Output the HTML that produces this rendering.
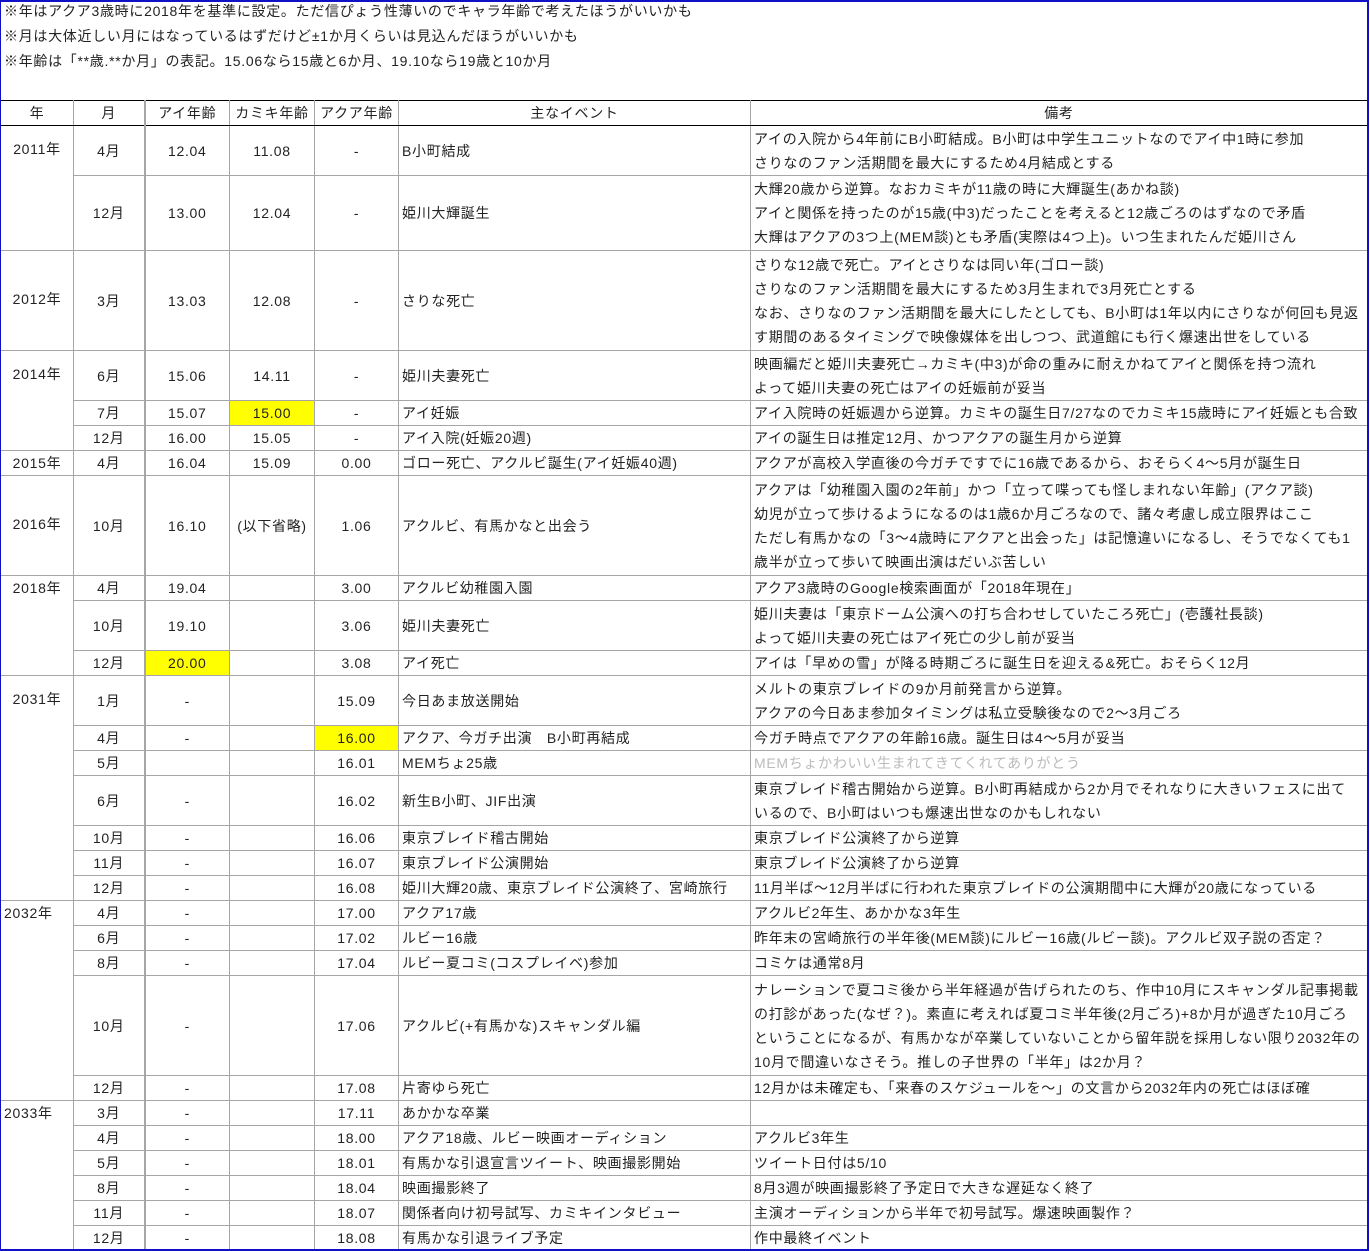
<!DOCTYPE html>
<html><head><meta charset="utf-8">
<style>
*{margin:0;padding:0;box-sizing:border-box}
body{width:1370px;height:1251px;background:#fff;font-family:"Liberation Sans","Noto Sans CJK JP",sans-serif;font-size:14px;color:#222;position:relative;overflow:hidden;letter-spacing:0.7px}
.frame{position:absolute;left:0;top:0;width:1369px;height:1251px;border:2px solid #1010c8;border-left:1px solid #1010c8;pointer-events:none}
.notes{position:absolute;left:4px;top:-1px;line-height:25px}
table{position:absolute;left:0;top:100px;border-collapse:collapse;table-layout:fixed;width:1367px}
td{border:1px solid #a6a6a6;height:25px;line-height:24px;white-space:nowrap;overflow:hidden;padding:0}
td.c{text-align:center}
td.l{padding-left:3px}
td.yr{vertical-align:top;text-align:center;border-left:1px solid #000}
td.yr.left{text-align:left;padding-left:3px}
td.m{border-right:2px solid #a6a6a6}
td.ev{border-left:1px solid #000}
tr.g td{border-top:1px solid #000}
tr.h td{border-top:1px solid #000;border-bottom:1px solid #000;text-align:center}
.y{background:#ffff00}
.gray{color:#bbb}
</style></head><body>
<div class="notes">※年はアクア3歳時に2018年を基準に設定。ただ信ぴょう性薄いのでキャラ年齢で考えたほうがいいかも<br>※月は大体近しい月にはなっているはずだけど±1か月くらいは見込んだほうがいいかも<br>※年齢は「**歳.**か月」の表記。15.06なら15歳と6か月、19.10なら19歳と10か月</div>
<table>
<colgroup><col style="width:73px"><col style="width:71px"><col style="width:85px"><col style="width:85px"><col style="width:84px"><col style="width:352px"><col style="width:617px"></colgroup>
<tr class="h"><td style="border-left:1px solid #000">年</td><td class="m">月</td><td>アイ年齢</td><td>カミキ年齢</td><td>アクア年齢</td><td class="ev">主なイベント</td><td>備考</td></tr>

<tr class="g" style="height:50px"><td class="yr" rowspan="2"><div style="line-height:46px">2011年</div></td><td class="c m">4月</td><td class="c">12.04</td><td class="c">11.08</td><td class="c">-</td><td class="l ev">B小町結成</td><td class="l">アイの入院から4年前にB小町結成。B小町は中学生ユニットなのでアイ中1時に参加<br>さりなのファン活期間を最大にするため4月結成とする</td></tr>
<tr style="height:75px"><td class="c m">12月</td><td class="c">13.00</td><td class="c">12.04</td><td class="c">-</td><td class="l ev">姫川大輝誕生</td><td class="l">大輝20歳から逆算。なおカミキが11歳の時に大輝誕生(あかね談)<br>アイと関係を持ったのが15歳(中3)だったことを考えると12歳ごろのはずなので矛盾<br>大輝はアクアの3つ上(MEM談)とも矛盾(実際は4つ上)。いつ生まれたんだ姫川さん</td></tr>

<tr class="g" style="height:100px"><td class="yr"><div style="line-height:96px">2012年</div></td><td class="c m">3月</td><td class="c">13.03</td><td class="c">12.08</td><td class="c">-</td><td class="l ev">さりな死亡</td><td class="l">さりな12歳で死亡。アイとさりなは同い年(ゴロー談)<br>さりなのファン活期間を最大にするため3月生まれで3月死亡とする<br>なお、さりなのファン活期間を最大にしたとしても、B小町は1年以内にさりなが何回も見返<br>す期間のあるタイミングで映像媒体を出しつつ、武道館にも行く爆速出世をしている</td></tr>

<tr class="g" style="height:50px"><td class="yr" rowspan="3"><div style="line-height:46px">2014年</div></td><td class="c m">6月</td><td class="c">15.06</td><td class="c">14.11</td><td class="c">-</td><td class="l ev">姫川夫妻死亡</td><td class="l">映画編だと姫川夫妻死亡→カミキ(中3)が命の重みに耐えかねてアイと関係を持つ流れ<br>よって姫川夫妻の死亡はアイの妊娠前が妥当</td></tr>
<tr><td class="c m">7月</td><td class="c">15.07</td><td class="c y">15.00</td><td class="c">-</td><td class="l ev">アイ妊娠</td><td class="l">アイ入院時の妊娠週から逆算。カミキの誕生日7/27なのでカミキ15歳時にアイ妊娠とも合致</td></tr>
<tr><td class="c m">12月</td><td class="c">16.00</td><td class="c">15.05</td><td class="c">-</td><td class="l ev">アイ入院(妊娠20週)</td><td class="l">アイの誕生日は推定12月、かつアクアの誕生月から逆算</td></tr>

<tr class="g"><td class="yr">2015年</td><td class="c m">4月</td><td class="c">16.04</td><td class="c">15.09</td><td class="c">0.00</td><td class="l ev">ゴロー死亡、アクルビ誕生(アイ妊娠40週)</td><td class="l">アクアが高校入学直後の今ガチですでに16歳であるから、おそらく4～5月が誕生日</td></tr>

<tr class="g" style="height:100px"><td class="yr"><div style="line-height:96px">2016年</div></td><td class="c m">10月</td><td class="c">16.10</td><td class="c">(以下省略)</td><td class="c">1.06</td><td class="l ev">アクルビ、有馬かなと出会う</td><td class="l">アクアは「幼稚園入園の2年前」かつ「立って喋っても怪しまれない年齢」(アクア談)<br>幼児が立って歩けるようになるのは1歳6か月ごろなので、諸々考慮し成立限界はここ<br>ただし有馬かなの「3～4歳時にアクアと出会った」は記憶違いになるし、そうでなくても1<br>歳半が立って歩いて映画出演はだいぶ苦しい</td></tr>

<tr class="g"><td class="yr" rowspan="3">2018年</td><td class="c m">4月</td><td class="c">19.04</td><td></td><td class="c">3.00</td><td class="l ev">アクルビ幼稚園入園</td><td class="l">アクア3歳時のGoogle検索画面が「2018年現在」</td></tr>
<tr style="height:50px"><td class="c m">10月</td><td class="c">19.10</td><td></td><td class="c">3.06</td><td class="l ev">姫川夫妻死亡</td><td class="l">姫川夫妻は「東京ドーム公演への打ち合わせしていたころ死亡」(壱護社長談)<br>よって姫川夫妻の死亡はアイ死亡の少し前が妥当</td></tr>
<tr><td class="c m">12月</td><td class="c y">20.00</td><td></td><td class="c">3.08</td><td class="l ev">アイ死亡</td><td class="l">アイは「早めの雪」が降る時期ごろに誕生日を迎える&amp;死亡。おそらく12月</td></tr>

<tr class="g" style="height:50px"><td class="yr" rowspan="7"><div style="line-height:46px">2031年</div></td><td class="c m">1月</td><td class="c">-</td><td></td><td class="c">15.09</td><td class="l ev">今日あま放送開始</td><td class="l">メルトの東京ブレイドの9か月前発言から逆算。<br>アクアの今日あま参加タイミングは私立受験後なので2～3月ごろ</td></tr>
<tr><td class="c m">4月</td><td class="c">-</td><td></td><td class="c y">16.00</td><td class="l ev">アクア、今ガチ出演　B小町再結成</td><td class="l">今ガチ時点でアクアの年齢16歳。誕生日は4～5月が妥当</td></tr>
<tr><td class="c m">5月</td><td></td><td></td><td class="c">16.01</td><td class="l ev">MEMちょ25歳</td><td class="l gray">MEMちょかわいい生まれてきてくれてありがとう</td></tr>
<tr style="height:50px"><td class="c m">6月</td><td class="c">-</td><td></td><td class="c">16.02</td><td class="l ev">新生B小町、JIF出演</td><td class="l">東京ブレイド稽古開始から逆算。B小町再結成から2か月でそれなりに大きいフェスに出て<br>いるので、B小町はいつも爆速出世なのかもしれない</td></tr>
<tr><td class="c m">10月</td><td class="c">-</td><td></td><td class="c">16.06</td><td class="l ev">東京ブレイド稽古開始</td><td class="l">東京ブレイド公演終了から逆算</td></tr>
<tr><td class="c m">11月</td><td class="c">-</td><td></td><td class="c">16.07</td><td class="l ev">東京ブレイド公演開始</td><td class="l">東京ブレイド公演終了から逆算</td></tr>
<tr><td class="c m">12月</td><td class="c">-</td><td></td><td class="c">16.08</td><td class="l ev">姫川大輝20歳、東京ブレイド公演終了、宮崎旅行</td><td class="l">11月半ば～12月半ばに行われた東京ブレイドの公演期間中に大輝が20歳になっている</td></tr>

<tr class="g"><td class="yr left" rowspan="5">2032年</td><td class="c m">4月</td><td class="c">-</td><td></td><td class="c">17.00</td><td class="l ev">アクア17歳</td><td class="l">アクルビ2年生、あかかな3年生</td></tr>
<tr><td class="c m">6月</td><td class="c">-</td><td></td><td class="c">17.02</td><td class="l ev">ルビー16歳</td><td class="l">昨年末の宮崎旅行の半年後(MEM談)にルビー16歳(ルビー談)。アクルビ双子説の否定？</td></tr>
<tr><td class="c m">8月</td><td class="c">-</td><td></td><td class="c">17.04</td><td class="l ev">ルビー夏コミ(コスプレイベ)参加</td><td class="l">コミケは通常8月</td></tr>
<tr style="height:100px"><td class="c m">10月</td><td class="c">-</td><td></td><td class="c">17.06</td><td class="l ev">アクルビ(+有馬かな)スキャンダル編</td><td class="l">ナレーションで夏コミ後から半年経過が告げられたのち、作中10月にスキャンダル記事掲載<br>の打診があった(なぜ？)。素直に考えれば夏コミ半年後(2月ごろ)+8か月が過ぎた10月ごろ<br>ということになるが、有馬かなが卒業していないことから留年説を採用しない限り2032年の<br>10月で間違いなさそう。推しの子世界の「半年」は2か月？</td></tr>
<tr><td class="c m">12月</td><td class="c">-</td><td></td><td class="c">17.08</td><td class="l ev">片寄ゆら死亡</td><td class="l">12月かは未確定も、「来春のスケジュールを～」の文言から2032年内の死亡はほぼ確</td></tr>

<tr class="g"><td class="yr left" rowspan="6">2033年</td><td class="c m">3月</td><td class="c">-</td><td></td><td class="c">17.11</td><td class="l ev">あかかな卒業</td><td class="l"></td></tr>
<tr><td class="c m">4月</td><td class="c">-</td><td></td><td class="c">18.00</td><td class="l ev">アクア18歳、ルビー映画オーディション</td><td class="l">アクルビ3年生</td></tr>
<tr><td class="c m">5月</td><td class="c">-</td><td></td><td class="c">18.01</td><td class="l ev">有馬かな引退宣言ツイート、映画撮影開始</td><td class="l">ツイート日付は5/10</td></tr>
<tr><td class="c m">8月</td><td class="c">-</td><td></td><td class="c">18.04</td><td class="l ev">映画撮影終了</td><td class="l">8月3週が映画撮影終了予定日で大きな遅延なく終了</td></tr>
<tr><td class="c m">11月</td><td class="c">-</td><td></td><td class="c">18.07</td><td class="l ev">関係者向け初号試写、カミキインタビュー</td><td class="l">主演オーディションから半年で初号試写。爆速映画製作？</td></tr>
<tr><td class="c m">12月</td><td class="c">-</td><td></td><td class="c">18.08</td><td class="l ev">有馬かな引退ライブ予定</td><td class="l">作中最終イベント</td></tr>
</table>
<div class="frame"></div>
</body></html>
